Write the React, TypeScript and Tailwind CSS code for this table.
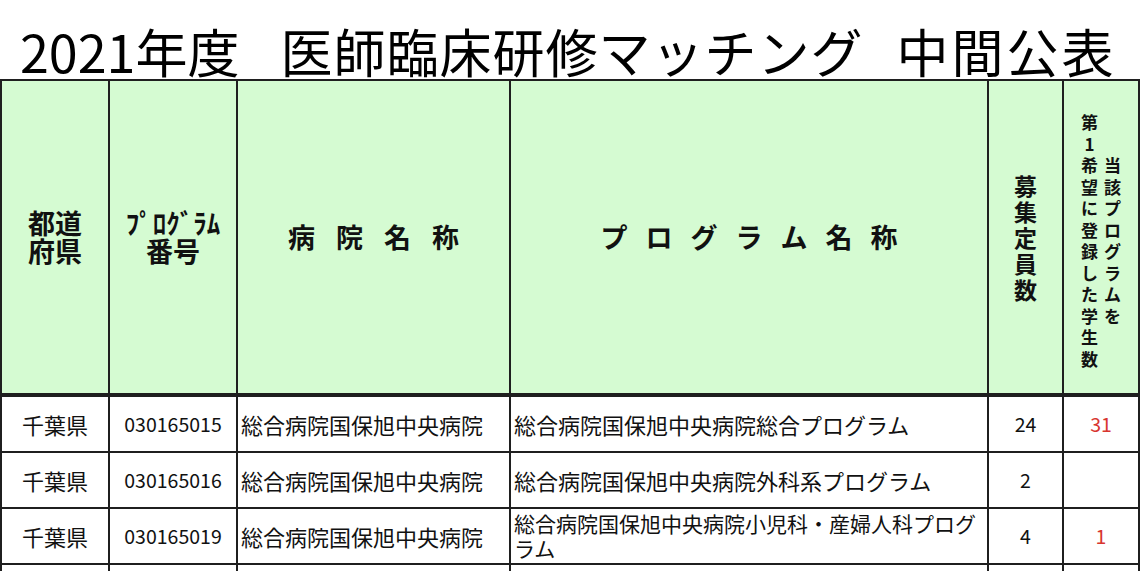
const rows = [
  {
    pref: "千葉県",
    code: "030165015",
    hospital: "総合病院国保旭中央病院",
    program: "総合病院国保旭中央病院総合プログラム",
    quota: "24",
    first: "31",
    wrap: false,
  },
  {
    pref: "千葉県",
    code: "030165016",
    hospital: "総合病院国保旭中央病院",
    program: "総合病院国保旭中央病院外科系プログラム",
    quota: "2",
    first: "",
    wrap: false,
  },
  {
    pref: "千葉県",
    code: "030165019",
    hospital: "総合病院国保旭中央病院",
    program: "総合病院国保旭中央病院小児科・産婦人科プログ\nラム",
    quota: "4",
    first: "1",
    wrap: true,
  },
];

const th = "border-r-2 border-b-4 border-[#1f1f1f] bg-[#d5fbd2] p-0 align-middle font-bold text-[#111]";
const td = "h-[56px] border-r-2 border-b-2 border-[#1f1f1f] p-0 align-middle text-[#111]";

function Spaced({ text, gap }: { text: string; gap: string }) {
  return (
    <div className={`flex justify-center text-[27px] leading-[28px] ${gap}`}>
      {text.split("").map((c, i) => (
        <span key={i}>{c}</span>
      ))}
    </div>
  );
}

function VCol({ text, className }: { text: string; className: string }) {
  return (
    <div className="flex flex-col items-center">
      {text.split("").map((c, i) => (
        <span key={i} className={className}>
          {c}
        </span>
      ))}
    </div>
  );
}

export default function App() {
  return (
    <div className="w-[1148px] h-[571px] overflow-hidden bg-white font-['Noto_Sans_CJK_JP',sans-serif]">
      <h1 className="flex h-[79px] pl-[20px] pt-[25px] text-[52px] leading-none font-normal text-black whitespace-nowrap">
        <span>2021年度</span>
        <span className="ml-[41px] tracking-[1px]">医師臨床研修マッチング</span>
        <span className="ml-[33px] tracking-[3px]">中間公表</span>
      </h1>
      <table className="w-[1140px] table-fixed border-separate border-spacing-0 border-l-2 border-t-2 border-[#1f1f1f]">
        <colgroup>
          <col className="w-[108px]" />
          <col className="w-[128px]" />
          <col className="w-[273px]" />
          <col className="w-[478px]" />
          <col className="w-[75px]" />
          <col className="w-[76px]" />
        </colgroup>
        <thead>
          <tr>
            <th className={`${th} h-[316px] text-[27px] leading-[28px]`}>
              都道
              <br />
              府県
            </th>
            <th className={`${th} text-[27px] leading-[28px]`}>
              ﾌﾟﾛｸﾞﾗﾑ
              <br />
              番号
            </th>
            <th className={th}>
              <Spaced text="病院名称" gap="gap-[21px]" />
            </th>
            <th className={th}>
              <Spaced text="プログラム名称" gap="gap-[18px]" />
            </th>
            <th className={th}>
              <VCol text="募集定員数" className="text-[23px] leading-[26px]" />
            </th>
            <th className={th}>
              <div className="flex flex-row-reverse items-center justify-center gap-[5px] pt-[6px]">
                <VCol text="当該プログラムを" className="w-[18px] text-center text-[17px] leading-[21.5px]" />
                <VCol text="第1希望に登録した学生数" className="w-[18px] text-center text-[17px] leading-[21.5px]" />
              </div>
            </th>
          </tr>
        </thead>
        <tbody>
          {rows.map((r) => (
            <tr key={r.code}>
              <td className={`${td} text-center text-[22px]`}>{r.pref}</td>
              <td className={`${td} text-center text-[19.5px]`}>{r.code}</td>
              <td className={`${td} pl-[3px] text-[22px] whitespace-nowrap`}>{r.hospital}</td>
              <td
                className={`${td} pl-[3px] whitespace-pre-line ${
                  r.wrap ? "text-[21px] leading-[25px]" : "text-[22px]"
                }`}
              >
                {r.program}
              </td>
              <td className={`${td} text-center text-[19.5px]`}>{r.quota}</td>
              <td className={`${td} text-center text-[19.5px] text-[#d8352f]`}>{r.first}</td>
            </tr>
          ))}
          <tr>
            <td className={td}></td>
            <td className={td}></td>
            <td className={td}></td>
            <td className={td}></td>
            <td className={td}></td>
            <td className={td}></td>
          </tr>
        </tbody>
      </table>
    </div>
  );
}
